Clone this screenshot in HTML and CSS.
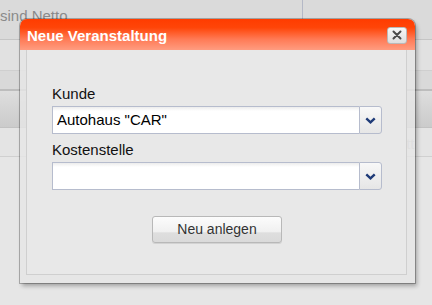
FILE: index.html
```html
<!DOCTYPE html>
<html lang="de">
<head>
<meta charset="utf-8">
<title>Neue Veranstaltung</title>
<link rel="stylesheet" href="styles.css">
</head>
<body>
<div class="page">
  <div class="topbar">
    <div class="tb-left"><span class="hint">sind Netto</span></div>
    <div class="tb-right"></div>
  </div>
  <div class="row r1"></div>
  <div class="row r2"></div>
  <div class="row r3"></div>
  <div class="row r4"><span class="colhead">Netto</span></div>
  <div class="row r5"></div>
</div>

<div class="window">
  <div class="win-header">
    <span class="win-title">Neue Veranstaltung</span>
    <button class="win-close" type="button" aria-label="Schließen">
      <svg width="10" height="10" viewBox="0 0 10 10"><path d="M1.5 1.5 L8.5 8.5 M8.5 1.5 L1.5 8.5" stroke="#4a4a4a" stroke-width="2" stroke-linecap="round" fill="none"/></svg>
    </button>
  </div>
  <div class="win-body">
    <div class="panel">
      <label class="field-label">Kunde</label>
      <div class="combo">
        <div class="combo-input">Autohaus "CAR"</div>
        <div class="combo-trigger">
          <svg width="11" height="7" viewBox="0 0 11 7"><path d="M1.3 1.3 L5.5 5.3 L9.7 1.3" stroke="#1f3b78" stroke-width="2.4" fill="none"/></svg>
        </div>
      </div>
      <label class="field-label">Kostenstelle</label>
      <div class="combo">
        <div class="combo-input"></div>
        <div class="combo-trigger">
          <svg width="11" height="7" viewBox="0 0 11 7"><path d="M1.3 1.3 L5.5 5.3 L9.7 1.3" stroke="#1f3b78" stroke-width="2.4" fill="none"/></svg>
        </div>
      </div>
      <div class="actions">
        <button class="btn" type="button">Neu anlegen</button>
      </div>
    </div>
  </div>
</div>
</body>
</html>
```
FILE: styles.css
```css
html, body {
  margin: 0;
  padding: 0;
}
body {
  width: 432px;
  height: 305px;
  overflow: hidden;
  position: relative;
  background: #e6e6e6;
  font-family: "Liberation Sans", Arial, sans-serif;
}

/* background page */
.page {
  display: flex;
  flex-direction: column;
}
.topbar {
  height: 39px;
  display: flex;
  background: #dadada;
  border-bottom: 1px solid #c5c5c5;
}
.tb-left {
  width: 302px;
  border-right: 1px solid #b4b8c6;
  overflow: hidden;
}
.tb-right {
  flex: 1;
}
.hint {
  display: block;
  margin-left: 0;
  padding-top: 7px;
  font-size: 15px;
  line-height: 17px;
  color: #8a8a8a;
  white-space: nowrap;
}
.row {
  flex: none;
}
.r1 {
  height: 30px;
  background: #e1e1e1;
  border-bottom: 1px solid #cfcfcf;
}
.r2 {
  height: 18px;
  background: #d9d9d9;
  border-bottom: 2px solid #bdbdbd;
}
.r3 {
  height: 36px;
  background: linear-gradient(#dedede, #cbcbcb);
  border-bottom: 1px solid #c2c2c2;
}
.r4 {
  height: 28px;
  background: #e4e4e4;
  border-bottom: 1px solid #d0d0d0;
  padding-left: 387px;
}
.colhead {
  display: block;
  width: 28px;
  overflow: hidden;
  padding-top: 7px;
  font-size: 15px;
  line-height: 17px;
  color: #c2c2c2;
  white-space: nowrap;
}
.r5 {
  height: 150px;
  background: #e6e6e6;
}

/* dialog window */
.window {
  position: absolute;
  left: 20px;
  top: 19px;
  width: 395px;
  height: 264px;
  border-radius: 7px 7px 0 0;
  overflow: hidden;
  display: flex;
  flex-direction: column;
  background: rgba(230, 230, 230, 0.8);
  box-shadow: 0 0 0 1px rgba(0, 0, 0, 0.25), 2px 3px 4px rgba(0, 0, 0, 0.3);
}
.win-header {
  flex: none;
  height: 31px;
  box-sizing: border-box;
  display: flex;
  align-items: center;
  padding: 1px 8px 0 7px;
  background: linear-gradient(#ff3c00 0%, #ff4508 28%, #ff7a55 65%, #ff9c80 100%);
}
.win-title {
  font-size: 15px;
  line-height: 17px;
  font-weight: bold;
  color: #ffffff;
  white-space: nowrap;
}
.win-close {
  margin-left: auto;
  width: 20px;
  height: 17px;
  padding: 0;
  box-sizing: border-box;
  border: 1px solid #b9b9b9;
  border-radius: 3px;
  background: linear-gradient(#f7f7f7, #dedede);
  display: flex;
  align-items: center;
  justify-content: center;
}
.win-body {
  flex: 1;
  display: flex;
  padding: 0 8px 8px 6px;
}
.panel {
  flex: 1;
  background: #e8e8e8;
  border: 1px solid #cfcfcf;
  border-top: none;
  padding: 35px 24px 0 25px;
}
.field-label {
  display: block;
  font-size: 15px;
  line-height: 17px;
  color: #111;
  margin-bottom: 4px;
}
.combo {
  display: flex;
  height: 28px;
  margin-bottom: 7px;
}
.combo-input {
  flex: 1;
  box-sizing: border-box;
  border: 1px solid #b6bccd;
  border-right: none;
  background: linear-gradient(#ececec 0, #ffffff 4px);
  padding: 0 4px;
  font-size: 15px;
  line-height: 26px;
  color: #000;
  white-space: nowrap;
}
.combo-trigger {
  width: 23px;
  box-sizing: border-box;
  border: 1px solid #b6bccd;
  border-radius: 0 3px 3px 0;
  background: linear-gradient(#f8f8f8, #e6e6e6);
  display: flex;
  align-items: center;
  justify-content: center;
}
.actions {
  padding-top: 19px;
}
.btn {
  display: block;
  margin: 0 auto;
  width: 130px;
  height: 27px;
  box-sizing: border-box;
  border: 1px solid #b8b8b8;
  border-radius: 3px;
  background: linear-gradient(#fcfcfc 0%, #f0f0f0 60%, #dedede 63%, #dadada 100%);
  box-shadow: 0 1px 0 #d2d2d2;
  font-family: "Liberation Sans", Arial, sans-serif;
  font-size: 14px;
  line-height: 25px;
  padding: 0;
  color: #333;
}
```
